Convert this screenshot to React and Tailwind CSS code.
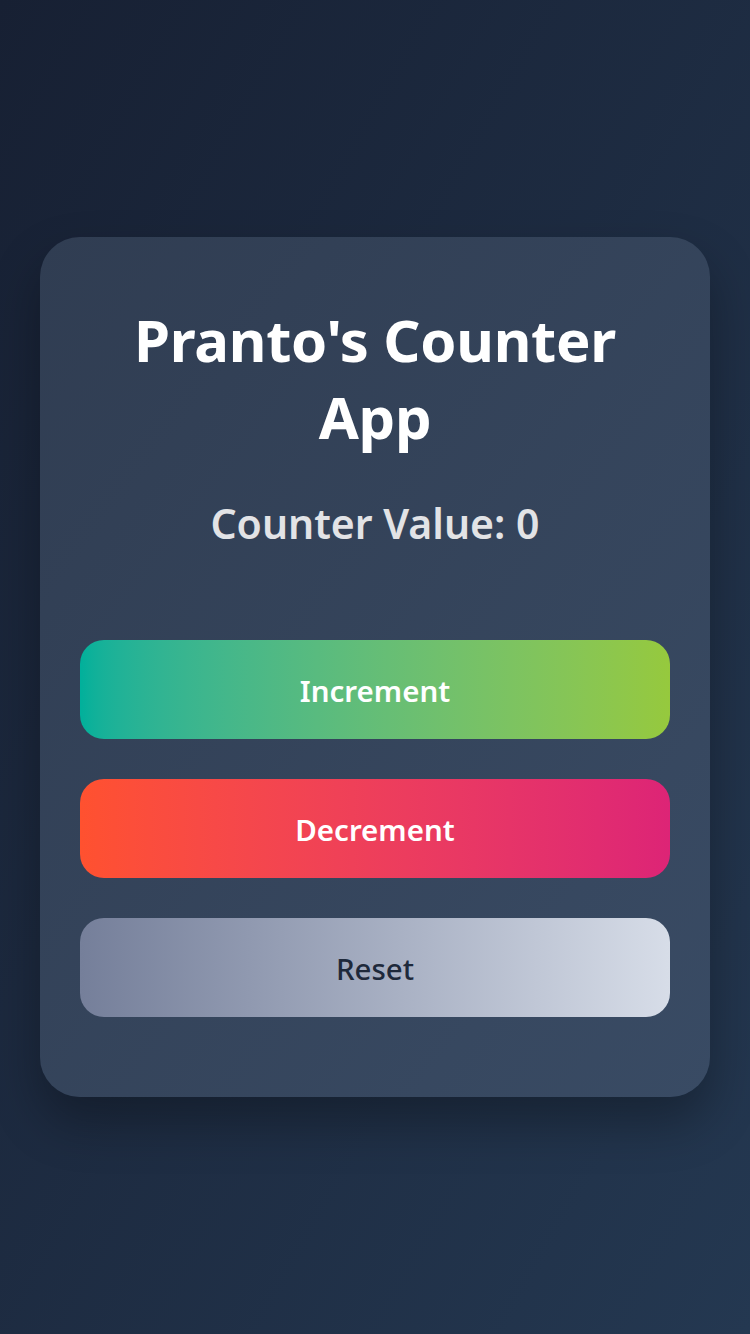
import React, { useState } from "react";

export default function App() {
  const [count, setCount] = useState(0);
  return (
    <div
      className="min-h-screen w-full flex items-center justify-center bg-gradient-to-br from-[#172033] to-[#243851]"
      style={{ fontFamily: '"Noto Sans", "Open Sans", sans-serif' }}
    >
      <div className="w-[670px] h-[860px] rounded-[40px] bg-gradient-to-br from-[#303d52] to-[#394b64] shadow-[0_25px_50px_rgba(0,0,0,0.3)] px-10 pt-[64px] flex flex-col items-center">
        <h1 className="text-[58px] leading-[77px] font-bold text-white text-center tracking-[-0.3px]">
          Pranto's Counter App
        </h1>
        <p className="mt-[46px] text-[41px] leading-[44px] font-semibold text-[#e2e3e6] text-center">
          Counter Value: {count}
        </p>
        <div className="mt-[95px] w-full flex flex-col gap-10">
          <button
            onClick={() => setCount(count + 1)}
            className="h-[99px] w-full pt-[3px] rounded-[24px] bg-gradient-to-r from-[#00b09b] to-[#96c93d] text-white text-[29.5px] font-semibold"
          >
            Increment
          </button>
          <button
            onClick={() => setCount(count - 1)}
            className="h-[99px] w-full pt-[3px] rounded-[24px] bg-gradient-to-r from-[#ff512f] to-[#dd2476] text-white text-[29.5px] font-semibold"
          >
            Decrement
          </button>
          <button
            onClick={() => setCount(0)}
            className="h-[99px] w-full pt-[3px] rounded-[24px] bg-gradient-to-r from-[#757f9a] to-[#d7dde8] text-[#1e293b] text-[29.5px] font-medium"
          >
            Reset
          </button>
        </div>
      </div>
    </div>
  );
}
